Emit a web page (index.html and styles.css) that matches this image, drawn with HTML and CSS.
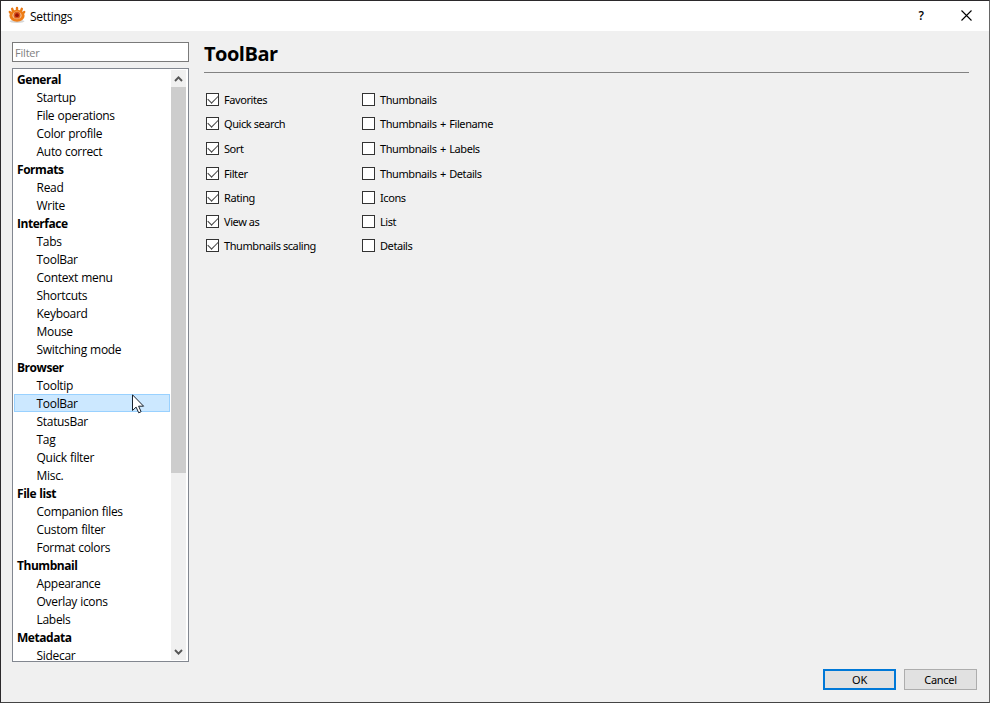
FILE: index.html
```html
<!DOCTYPE html>
<html lang="en">
<head>
<meta charset="utf-8">
<title>Settings</title>
<link rel="stylesheet" href="styles.css">
</head>
<body>
<div class="window">
  <header class="titlebar">
    <svg class="logo" width="18" height="18" viewBox="0 0 18 18">
      <ellipse cx="9" cy="15.3" rx="7.5" ry="1.6" fill="#d6d6d6"/>
      <g stroke="#e97813" stroke-width="2.4" stroke-linecap="round">
        <path d="M9 5V2M5.3 6L4.2 2.8M12.7 6l1.1-3.2M3.5 8L1.8 6M14.5 8l1.7-2"/>
      </g>
      <ellipse cx="9" cy="9.7" rx="7.6" ry="6" fill="#ee7d18"/>
      <ellipse cx="9" cy="9.4" rx="4.6" ry="3.8" fill="#f6c797"/>
      <circle cx="9" cy="9.2" r="3.4" fill="#dc5a1b"/>
      <circle cx="9" cy="9.2" r="1.9" fill="#9c1408"/>
    </svg>
    <span class="title">Settings</span>
    <span class="help">?</span>
    <svg class="close" width="11" height="11" viewBox="0 0 11 11"><path d="M.5.5l10 10M10.5.5l-10 10" stroke="#000" stroke-width="1.1" fill="none"/></svg>
  </header>
  <div class="content">
    <aside class="sidebar">
      <input class="filter" type="text" placeholder="Filter">
      <div class="tree">
        <ul class="items">
          <li class="group">General</li><li>Startup</li><li>File operations</li><li>Color profile</li><li>Auto correct</li>
          <li class="group">Formats</li><li>Read</li><li>Write</li>
          <li class="group">Interface</li><li>Tabs</li><li>ToolBar</li><li>Context menu</li><li>Shortcuts</li><li>Keyboard</li><li>Mouse</li><li>Switching mode</li>
          <li class="group">Browser</li><li>Tooltip</li><li class="selected">ToolBar</li><li>StatusBar</li><li>Tag</li><li>Quick filter</li><li>Misc.</li>
          <li class="group">File list</li><li>Companion files</li><li>Custom filter</li><li>Format colors</li>
          <li class="group">Thumbnail</li><li>Appearance</li><li>Overlay icons</li><li>Labels</li>
          <li class="group">Metadata</li><li>Sidecar</li>
        </ul>
        <div class="scrollbar">
          <svg width="15" height="17" viewBox="0 0 15 17"><path d="M4 11l3.5-3.7L11 11" fill="none" stroke="#555" stroke-width="1.9"/></svg>
          <div class="thumb"></div>
          <svg class="down" width="15" height="17" viewBox="0 0 15 17"><path d="M4 7l3.5 3.7L11 7" fill="none" stroke="#555" stroke-width="1.9"/></svg>
        </div>
      </div>
    </aside>
    <main class="panel">
      <h1>ToolBar</h1>
      <div class="options">
        <div class="column">
          <label><i class="box on"></i><span>Favorites</span></label>
          <label><i class="box on"></i><span>Quick search</span></label>
          <label><i class="box on"></i><span>Sort</span></label>
          <label><i class="box on"></i><span>Filter</span></label>
          <label><i class="box on"></i><span>Rating</span></label>
          <label><i class="box on"></i><span>View as</span></label>
          <label><i class="box on"></i><span>Thumbnails scaling</span></label>
        </div>
        <div class="column">
          <label><i class="box"></i><span>Thumbnails</span></label>
          <label><i class="box"></i><span class="plus">Thumbnails + Filename</span></label>
          <label><i class="box"></i><span class="plus">Thumbnails + Labels</span></label>
          <label><i class="box"></i><span class="plus">Thumbnails + Details</span></label>
          <label><i class="box"></i><span>Icons</span></label>
          <label><i class="box"></i><span>List</span></label>
          <label><i class="box"></i><span>Details</span></label>
        </div>
      </div>
      <footer class="actions"><button class="primary">OK</button><button>Cancel</button></footer>
    </main>
  </div>
  <svg class="cursor" width="13" height="20" viewBox="0 0 13 20"><path d="M.5.8v15.7l3.6-3.4 2.6 5.7 2.4-1.1-2.5-5.5h5z" fill="#fff" stroke="#17202b"/></svg>
</div>
</body>
</html>
```

FILE: styles.css
```css
* { box-sizing: border-box; }
body { margin: 0; font: 12px/18px "Open Sans", "Noto Sans", sans-serif; color: #000; }
.window { position: relative; width: 990px; height: 703px; border: 1px solid #2b292b; border-right-color: #666; border-bottom-color: #444; background: #f0f0f0; display: flex; flex-direction: column; overflow: hidden; }
.titlebar { height: 30px; flex: none; background: #fff; display: flex; align-items: center; padding: 0 17px 0 7px; }
.logo { margin-top: -2px; }
.title { margin: 1px 0 0 4px; letter-spacing: -0.28px; }
.help { margin-left: auto; margin-right: 37px; font-weight: 600; }
.close { margin-top: -2px; }
.content { flex: 1; display: flex; min-height: 0; }
.sidebar { width: 177px; margin: 11px 0 0 11px; }
.filter { display: block; width: 177px; height: 20px; border: 1px solid #7a7a7a; background: #fff; padding: 1px 2px 0; font: 11px/16px "Open Sans", sans-serif; letter-spacing: -0.2px; outline: 0; border-radius: 0; }
.filter::placeholder { color: #7f7f7f; opacity: 1; }
.tree { margin-top: 6px; width: 177px; height: 594px; border: 1px solid #828790; padding: 1px; background: #fff; display: flex; }
.items { list-style: none; margin: 0; padding: 0; width: 157px; height: 590px; overflow: hidden; }
.items li { height: 18px; width: 156px; padding-left: 22.6px; line-height: 20px; letter-spacing: -0.33px; word-spacing: 0.5px; white-space: nowrap; }
.items .group { padding-left: 3px; font-weight: 700; letter-spacing: -0.45px; }
.items .selected { background: #cce8ff; border: 1px solid #99d1ff; padding-left: 21.6px; line-height: 18px; }
.scrollbar { width: 15px; background: #f0f0f0; display: flex; flex-direction: column; }
.scrollbar svg { flex: none; }
.thumb { height: 386px; background: #cdcdcd; }
.down { margin-top: auto; }
.panel { flex: 1; margin-left: 15px; display: flex; flex-direction: column; padding-right: 12px; }
h1 { margin: 0 8px 0 0; height: 42px; border-bottom: 1px solid #828282; padding-top: 8px; font-size: 20px; line-height: 30px; letter-spacing: -0.5px; }
.options { display: flex; padding: 15px 0 0 2px; }
.column { width: 156px; display: grid; grid-template-rows: 24px 25px 25px 24px 24px 24px 24px; }
.column label { display: flex; align-items: center; height: 24px; gap: 5px; font: 11px/14px "Noto Sans", sans-serif; letter-spacing: -0.42px; white-space: nowrap; }
.column .plus { word-spacing: 1px; }
.box { width: 13px; height: 13px; margin-top: -2px; border: 1px solid #333; background: #fff; display: flex; }
.on::after { content: ""; width: 10px; height: 5px; margin: 2px 0 0 1px; border-left: 1.5px solid #444; border-bottom: 1.5px solid #444; transform: translateY(-1px) rotate(-45deg); }
.actions { display: flex; justify-content: flex-end; gap: 8px; margin: auto 0 12px; }
button { width: 73px; height: 21px; border: 1px solid #adadad; background: #e1e1e1; font: 11px/15px "Noto Sans", sans-serif; padding: 0; letter-spacing: -0.3px; }
.primary { border: 2px solid #0078d7; }
.cursor { position: absolute; left: 131px; top: 393px; }
```
